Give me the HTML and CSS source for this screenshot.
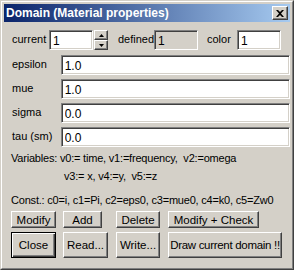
FILE: index.html
```html
<!DOCTYPE html>
<html lang="en">
<head>
    <meta charset="UTF-8">
    <title>Domain (Material properties)</title>
    <link rel="stylesheet" href="styles.css">
</head>
<body>
    <div class="window">
        <div class="frame">
            <div class="titlebar">
                <span class="title">Domain (Material properties)</span>
                <button class="close-btn">
                    <svg width="8" height="7" viewBox="0 0 8 7"><path d="M0 0h2l2 2 2-2h2L5 3.5 8 7H6L4 5 2 7H0l3-3.5z" fill="#000"/></svg>
                </button>
            </div>

            <div class="content">
                <!-- current / defined / color -->
                <div class="top-row">
                    <span class="lbl lbl-current">current</span>
                    <input class="field field-small" type="text" value="1">
                    <div class="spin">
                        <button class="spin-btn"><svg width="5" height="3" viewBox="0 0 5 3"><path d="M2.5 0L5 3H0z" fill="#000"/></svg></button>
                        <button class="spin-btn"><svg width="5" height="3" viewBox="0 0 5 3"><path d="M0 0h5L2.5 3z" fill="#000"/></svg></button>
                    </div>
                    <span class="lbl lbl-defined">defined</span>
                    <input class="field field-small field-disabled" type="text" value="1" disabled>
                    <span class="lbl lbl-color">color</span>
                    <input class="field field-small" type="text" value="1">
                </div>

                <div class="prop-row">
                    <span class="lbl prop-lbl">epsilon</span>
                    <input class="field field-wide" type="text" value="1.0">
                </div>
                <div class="prop-row">
                    <span class="lbl prop-lbl">mue</span>
                    <input class="field field-wide" type="text" value="1.0">
                </div>
                <div class="prop-row">
                    <span class="lbl prop-lbl">sigma</span>
                    <input class="field field-wide" type="text" value="0.0">
                </div>
                <div class="prop-row">
                    <span class="lbl prop-lbl">tau (sm)</span>
                    <input class="field field-wide" type="text" value="0.0">
                </div>

                <p class="info">Variables: v0:= time, v1:=frequency,&nbsp; v2:=omega</p>
                <p class="info info-indent">v3:= x, v4:=y,&nbsp; v5:=z</p>
                <p class="info info-const">Const.: c0=i, c1=Pi, c2=eps0, c3=mue0, c4=k0, c5=Zw0</p>

                <div class="btn-grid">
                    <button class="btn btn-modify">Modify</button>
                    <button class="btn btn-add">Add</button>
                    <button class="btn btn-delete">Delete</button>
                    <button class="btn btn-check">Modify + Check</button>

                    <button class="btn btn-close btn-default">Close</button>
                    <button class="btn btn-tall btn-read">Read...</button>
                    <button class="btn btn-tall btn-write">Write...</button>
                    <button class="btn btn-tall btn-draw">Draw current domain !!</button>
                </div>
            </div>
        </div>
    </div>
</body>
</html>
```

FILE: styles.css
```css
html, body {
    margin: 0;
    padding: 0;
}
body {
    font-family: "Liberation Sans", Arial, sans-serif;
    font-size: 11px;
    color: #000;
    background: #d4d0c8;
}
.window {
    width: 294px;
    height: 270px;
    box-sizing: border-box;
    border: 1px solid;
    border-color: #d4d0c8 #404040 #404040 #d4d0c8;
    background: #d4d0c8;
}
.frame {
    height: 100%;
    box-sizing: border-box;
    border: 1px solid;
    border-color: #fff #808080 #808080 #fff;
    padding: 2px;
}
.titlebar {
    height: 18px;
    display: flex;
    align-items: center;
    justify-content: space-between;
    padding: 0 2px 0 2px;
    background: linear-gradient(to right, #0a246a, #a6caf0);
}
.title {
    color: #fff;
    font-weight: bold;
    font-size: 12px;
}
.close-btn,
.spin-btn,
.btn {
    font-family: inherit;
    font-size: 11.5px;
    color: #000;
    background: #d4d0c8;
    border: 1px solid;
    border-color: #fff #404040 #404040 #fff;
    box-shadow: inset -1px -1px 0 #808080, inset 1px 1px 0 #d4d0c8;
    padding: 0;
    margin: 0;
    display: flex;
    align-items: center;
    justify-content: center;
    white-space: nowrap;
}
.close-btn {
    width: 16px;
    height: 14px;
}
.content {
    padding: 8px 0 0 7px;
}
.top-row {
    display: flex;
    align-items: center;
    height: 20px;
}
.lbl {
    white-space: nowrap;
}
.lbl-current {
    margin: -3px 0 0 1px;
    width: 37px;
}
.lbl-defined {
    margin: -3px 0 0 10px;
    width: 36px;
}
.lbl-color {
    margin: -3px 0 0 9px;
    width: 30px;
}
.field {
    box-sizing: border-box;
    height: 20px;
    margin: 0;
    padding: 2px 2px 0 3px;
    font-family: inherit;
    font-size: 12px;
    color: #000;
    background: #fff;
    border: 1px solid;
    border-color: #808080 #fff #fff #808080;
    box-shadow: inset 1px 1px 0 #404040, inset -1px -1px 0 #d4d0c8;
    outline: none;
}
.field-small {
    width: 44px;
}
.field-disabled {
    background: #d4d0c8;
    color: #000;
}
.spin {
    display: flex;
    flex-direction: column;
    margin-left: 1px;
}
.spin-btn {
    width: 14px;
    height: 10px;
}
.prop-row {
    display: flex;
    align-items: flex-start;
    margin-top: 4px;
}
.top-row + .prop-row {
    margin-top: 5px;
}
.prop-lbl {
    width: 49px;
    padding: 3px 0 0 1px;
}
.field-wide {
    width: 231px;
}
.info {
    margin: 5px 0 0 0;
    line-height: 13px;
    white-space: nowrap;
    letter-spacing: -0.2px;
}
.info-indent {
    margin-top: 5px;
    padding-left: 53px;
}
.info-const {
    margin-top: 11px;
}
.btn-grid {
    display: grid;
    grid-template-columns: 52px 53px 52px auto;
    row-gap: 4px;
    margin-top: 4px;
}
.btn-grid .btn {
    justify-self: start;
    height: 17px;
}
.btn-grid .btn-tall,
.btn-grid .btn-default {
    height: 26px;
}
.btn-modify { width: 45px; }
.btn-add { width: 39px; }
.btn-delete { width: 44px; }
.btn-check { width: 91px; }
.btn-close { width: 45px; }
.btn-read { width: 45px; }
.btn-write { width: 44px; }
.btn-draw {
    width: 114px;
    letter-spacing: -0.3px;
}
.btn-default {
    border: 1px solid #000;
    box-shadow: inset 1px 1px 0 #fff, inset -1px -1px 0 #404040, inset -2px -2px 0 #808080;
}
```
